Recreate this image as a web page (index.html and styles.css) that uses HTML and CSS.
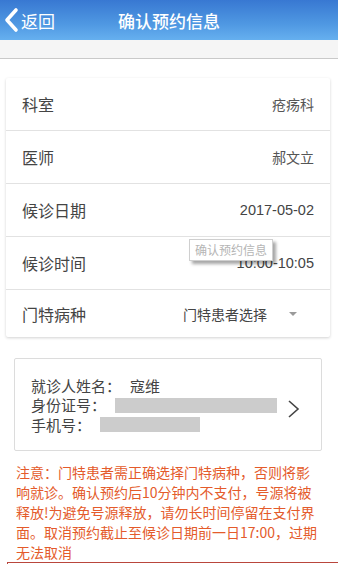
FILE: index.html
```html
<!DOCTYPE html>
<html lang="zh-CN">
<head>
<meta charset="utf-8">
<title>确认预约信息</title>
<link rel="stylesheet" href="styles.css">
</head>
<body>
<header class="topbar">
  <a class="back" href="#">
    <svg class="back-icon" width="18" height="26" viewBox="0 0 18 26"><polyline points="14,3 5,13 14,23" fill="none" stroke="#fff" stroke-width="3.6" stroke-linecap="round" stroke-linejoin="round"/></svg>
    <span>返回</span>
  </a>
  <h1 class="title">确认预约信息</h1>
</header>
<div class="subbar"></div>

<section class="card">
  <div class="row"><span class="label">科室</span><span class="value">疮疡科</span></div>
  <div class="row"><span class="label">医师</span><span class="value">郝文立</span></div>
  <div class="row"><span class="label">候诊日期</span><span class="value num">2017-05-02</span></div>
  <div class="row has-tip"><span class="label">候诊时间</span><span class="value num">10:00-10:05</span><span class="tooltip">确认预约信息</span></div>
  <div class="row last"><span class="label">门特病种</span><span class="select"><span class="select-text">门特患者选择</span><span class="caret"></span></span></div>
</section>

<section class="patient">
  <div class="patient-info">
    <div class="pline">就诊人姓名：<span class="pval">寇维</span></div>
    <div class="pline">身份证号：<span class="mask mask-id"></span></div>
    <div class="pline">手机号：<span class="mask mask-phone"></span></div>
  </div>
  <svg class="chev" width="14" height="20" viewBox="0 0 14 20"><polyline points="2,2 11,10 2,18" fill="none" stroke="#444" stroke-width="1.6"/></svg>
</section>

<p class="note">注意：门特患者需正确选择门特病种，否则将影响就诊。确认预约后10分钟内不支付，号源将被释放!为避免号源释放，请勿长时间停留在支付界面。取消预约截止至候诊日期前一日17:00，过期无法取消</p>

<div class="bottom-box"></div>
</body>
</html>
```

FILE: styles.css
```css
html, body {
  margin: 0;
  padding: 0;
  background: #fff;
  font-family: "Noto Sans CJK SC", "Liberation Sans", sans-serif;
  overflow: hidden;
}

.topbar {
  height: 40px;
  background: linear-gradient(to bottom, #3878d2 0%, #4f98e2 60%, #66b0ef 100%);
  display: flex;
  align-items: center;
  justify-content: center;
  position: relative;
}

.back {
  position: absolute;
  left: 2px;
  top: 0;
  height: 40px;
  display: flex;
  align-items: center;
  color: #fff;
  text-decoration: none;
  font-size: 17px;
}

.back-icon {
  margin-right: 1px;
}

.title {
  margin: 0;
  color: #fff;
  font-size: 17px;
  font-weight: 500;
}

.subbar {
  height: 18px;
  background: #f5f5f5;
  border-bottom: 1px solid #c9c9c9;
}

.card {
  margin: 19px 8px 0 6px;
  background: #fff;
  border-radius: 2px;
  box-shadow: 0 1px 3px rgba(0, 0, 0, 0.18);
}

.row {
  box-sizing: border-box;
  height: 53px;
  display: flex;
  align-items: center;
  justify-content: space-between;
  padding: 0 16px;
  border-bottom: 1px solid #e2e2e2;
  position: relative;
}

.row.last {
  height: 47px;
  border-bottom: none;
}

.label {
  font-size: 16px;
  color: #444;
}

.value {
  font-size: 14px;
  color: #555;
}

.value.num {
  font-family: "Liberation Sans", sans-serif;
  font-size: 14.5px;
  color: #444;
}

.tooltip {
  position: absolute;
  left: 183px;
  top: 2px;
  padding: 0 5px;
  height: 20px;
  line-height: 19px;
  font-size: 12px;
  color: #b5b5b5;
  background: #fff;
  border: 1px solid #cfcfcf;
  box-shadow: 3px 3px 3px rgba(0, 0, 0, 0.35);
}

.select {
  display: flex;
  align-items: center;
  font-size: 14px;
  color: #444;
}

.caret {
  width: 0;
  height: 0;
  margin-left: 22px;
  margin-right: 17px;
  border-left: 4.5px solid transparent;
  border-right: 4.5px solid transparent;
  border-top: 4.5px solid #9a9a9a;
}

.patient {
  margin: 21px 16px 0 14px;
  border: 1px solid #dcdcdc;
  border-radius: 2px;
  height: 91px;
  display: flex;
  align-items: center;
  padding: 0 20px 0 16px;
}

.patient-info {
  flex: 1;
  padding-top: 1px;
}

.pline {
  font-size: 15px;
  line-height: 19.5px;
  color: #444;
  display: flex;
  align-items: center;
}

.pval {
  margin-left: 9px;
}

.mask {
  display: inline-block;
  height: 15px;
  background: #cccccc;
  margin-left: 9px;
}

.mask-id {
  width: 162px;
}

.mask-phone {
  width: 100px;
}

.chev {
  margin-top: 8px;
}

.note {
  margin: 11px 0 0 16px;
  width: 304px;
  font-size: 14px;
  line-height: 20px;
  color: #e45b2b;
}

.bottom-box {
  margin: 0 0 0 7px;
  height: 2px;
  border-top: 1px solid #b9463c;
  border-left: 1px solid #b9463c;
}
```
